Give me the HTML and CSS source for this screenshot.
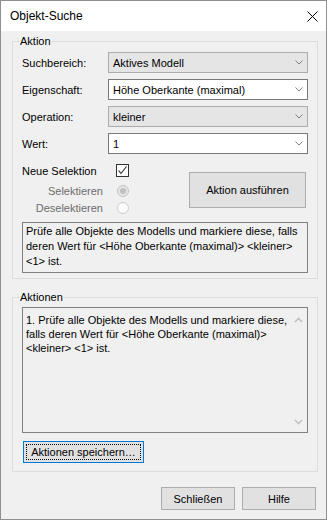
FILE: index.html
```html
<!DOCTYPE html>
<html lang="de">
<head>
	<meta charset="utf-8">
	<title>Objekt-Suche</title>
	<link rel="stylesheet" href="styles.css">
</head>
<body>
<div class="window">
	<!-- title bar -->
	<div class="titlebar">
		<span class="title">Objekt-Suche</span>
		<svg class="close" width="11" height="11" viewBox="0 0 11 11">
			<path d="M0.5 0.5 L10.5 10.5 M10.5 0.5 L0.5 10.5" stroke="#000" stroke-width="1" fill="none"/>
		</svg>
	</div>

	<div class="client">
		<fieldset class="group group-aktion">
			<legend>Aktion</legend>

			<div class="form-grid">
				<label>Suchbereich:</label>
				<div class="combo readonly"><span>Aktives Modell</span><svg class="chev" width="8" height="5" viewBox="0 0 8 5"><path d="M0.5 0.5 L4 4 L7.5 0.5" stroke="#7f7f7f" fill="none"/></svg></div>

				<label>Eigenschaft:</label>
				<div class="combo edit"><span>Höhe Oberkante (maximal)</span><svg class="chev" width="8" height="5" viewBox="0 0 8 5"><path d="M0.5 0.5 L4 4 L7.5 0.5" stroke="#7f7f7f" fill="none"/></svg></div>

				<label>Operation:</label>
				<div class="combo readonly"><span>kleiner</span><svg class="chev" width="8" height="5" viewBox="0 0 8 5"><path d="M0.5 0.5 L4 4 L7.5 0.5" stroke="#7f7f7f" fill="none"/></svg></div>

				<label>Wert:</label>
				<div class="combo edit"><span>1</span><svg class="chev" width="8" height="5" viewBox="0 0 8 5"><path d="M0.5 0.5 L4 4 L7.5 0.5" stroke="#7f7f7f" fill="none"/></svg></div>
			</div>

			<div class="select-area">
				<div class="options">
					<div class="opt-row first">
						<span class="opt-label left">Neue Selektion</span>
						<span class="checkbox">
							<svg width="11" height="11" viewBox="0 0 11 11"><path d="M1.5 5.5 L4 8.5 L9.5 1.5" stroke="#222" stroke-width="1.1" fill="none"/></svg>
						</span>
					</div>
					<div class="opt-row">
						<span class="opt-label disabled">Selektieren</span>
						<span class="radio checked"></span>
					</div>
					<div class="opt-row">
						<span class="opt-label disabled">Deselektieren</span>
						<span class="radio"></span>
					</div>
				</div>
				<button class="btn btn-run">Aktion ausführen</button>
			</div>

			<div class="desc">
				Prüfe alle Objekte des Modells und markiere diese, falls<br>
				deren Wert für &lt;Höhe Oberkante (maximal)&gt; &lt;kleiner&gt;<br>
				&lt;1&gt; ist.
			</div>
		</fieldset>

		<fieldset class="group group-aktionen">
			<legend>Aktionen</legend>
			<div class="listbox">
				<div class="list-text">
					1. Prüfe alle Objekte des Modells und markiere diese,<br>
					falls deren Wert für &lt;Höhe Oberkante (maximal)&gt;<br>
					&lt;kleiner&gt; &lt;1&gt; ist.
				</div>
				<div class="scrollbar">
					<svg width="9" height="6" viewBox="0 0 9 6"><path d="M1 5 L4.5 1.5 L8 5" stroke="#c2c2c2" stroke-width="1.6" fill="none"/></svg>
					<svg width="9" height="6" viewBox="0 0 9 6"><path d="M1 1 L4.5 4.5 L8 1" stroke="#c2c2c2" stroke-width="1.6" fill="none"/></svg>
				</div>
			</div>
			<button class="btn btn-save focused">Aktionen speichern…</button>
		</fieldset>

		<div class="footer">
			<button class="btn btn-foot">Schließen</button>
			<button class="btn btn-foot">Hilfe</button>
		</div>
	</div>
</div>
</body>
</html>
```

FILE: styles.css
```css
* {
	box-sizing: border-box;
}
body {
	margin: 0;
	font-family: "Liberation Sans", Arial, sans-serif;
	font-size: 11px;
	color: #000;
}
.window {
	width: 327px;
	height: 520px;
	border: 1px solid #8f8f8f;
	background: #f0f0f0;
	display: flex;
	flex-direction: column;
}
.titlebar {
	height: 30px;
	background: #fff;
	display: flex;
	align-items: center;
	justify-content: space-between;
	padding: 0 8px 0 9px;
	font-size: 12px;
}
.close {
	display: block;
}
.client {
	flex: 1;
	padding: 3px 8px 0 11px;
	display: flex;
	flex-direction: column;
}

/* group boxes */
.group {
	margin: 0;
	border: 1px solid #dcdcdc;
	padding: 0 9px 5px 9px;
	min-width: 0;
}
.group legend {
	padding: 0 1px;
	margin-left: -3px;
	line-height: 15px;
}
.group-aktionen {
	margin-top: 11px;
	padding-bottom: 8px;
}

/* combo rows */
.form-grid {
	margin-top: 3px;
	display: grid;
	grid-template-columns: 86px 1fr;
	row-gap: 6px;
	align-items: center;
}
.combo {
	height: 21px;
	border: 1px solid #acacac;
	display: flex;
	align-items: center;
	justify-content: space-between;
	padding: 0 4px 0 4px;
}
.combo.readonly {
	background: #e5e5e5;
}
.combo.edit {
	background: #fff;
	border-color: #7a7a7a;
}
.chev {
	display: block;
}

/* check + radio area */
.select-area {
	margin-top: 9px;
	display: flex;
	justify-content: space-between;
	align-items: flex-start;
}
.options {
	display: flex;
	flex-direction: column;
}
.opt-row {
	display: grid;
	grid-template-columns: 94px 13px;
	align-items: center;
	height: 17px;
}
.opt-row.first {
	height: 15px;
	margin-bottom: 4px;
}
.opt-label {
	text-align: right;
	padding-right: 13px;
}
.opt-label.left {
	text-align: left;
	padding-right: 0;
}
.opt-label.disabled {
	color: #6d6d6d;
}
.checkbox {
	width: 13px;
	height: 13px;
	border: 1px solid #333;
	background: #fff;
	display: flex;
	align-items: center;
	justify-content: center;
}
.radio {
	width: 12px;
	height: 12px;
	margin-left: 1px;
	border: 1px solid #cccccc;
	border-radius: 50%;
	background: #fcfcfc;
	display: flex;
	align-items: center;
	justify-content: center;
}
.radio.checked {
	background: #e6e6e6;
	border-color: #c4c4c4;
}
.radio.checked::after {
	content: "";
	width: 6px;
	height: 6px;
	border-radius: 50%;
	background: #c0c0c0;
}

/* buttons */
.btn {
	font-family: inherit;
	font-size: 11px;
	color: #000;
	background: #e1e1e1;
	border: 1px solid #adadad;
	padding: 0;
	margin: 0;
}
.btn-run {
	width: 117px;
	height: 36px;
	margin-top: 9px;
	margin-right: 2px;
}
.btn-save {
	position: relative;
	width: 121px;
	height: 22px;
	margin-top: 8px;
	margin-left: 1px;
	display: block;
}
.btn.focused {
	border-color: #0078d7;
}
.btn.focused::after {
	content: "";
	position: absolute;
	inset: 2px;
	border: 1px dotted #000;
}

/* text boxes */
.desc {
	margin-top: 6px;
	height: 51px;
	border: 1px solid #828282;
	padding: 1px 3px;
	line-height: 15px;
}
.listbox {
	margin-top: 2px;
	height: 126px;
	border: 1px solid #828282;
	display: flex;
}
.list-text {
	flex: 1;
	padding: 5px 0 0 3px;
	line-height: 14px;
	white-space: nowrap;
	overflow: hidden;
}
.scrollbar {
	width: 17px;
	flex-shrink: 0;
	display: flex;
	flex-direction: column;
	justify-content: space-between;
	align-items: center;
	padding: 9px 0 7px 0;
}
.scrollbar svg {
	display: block;
}

.footer {
	margin-top: 15px;
	display: flex;
	justify-content: flex-end;
	gap: 7px;
	padding-right: 2px;
}
.btn-foot {
	width: 74px;
	height: 23px;
}
```
